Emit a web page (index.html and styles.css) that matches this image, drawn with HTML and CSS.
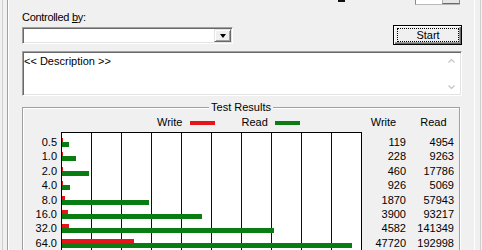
FILE: index.html
```html
<!DOCTYPE html>
<html lang="en">
<head>
    <meta charset="UTF-8">
    <title>Disk Benchmark</title>
    <link rel="stylesheet" href="styles.css">
</head>
<body>
    <div class="outer">
        <div class="frame">
            <div class="strip">
                <span class="mark"></span>
                <span class="spin"><span class="spin-btn"></span></span>
            </div>

            <div class="caption">Controlled <u>b</u>y:</div>

            <div class="ctrl-row">
                <div class="combo">
                    <span class="drop"><i class="tri"></i></span>
                </div>
                <button class="start"><span class="focus">Start</span></button>
            </div>

            <div class="desc">
                <div class="desc-text">&lt;&lt; Description &gt;&gt;</div>
                <div class="vscroll">
                    <svg width="7" height="4" viewBox="0 0 7 4"><polyline points="0.5,3.5 3.5,0.5 6.5,3.5" fill="none" stroke="#c4c4c4" stroke-width="1.2"/></svg>
                    <svg width="7" height="4" viewBox="0 0 7 4"><polyline points="0.5,0.5 3.5,3.5 6.5,0.5" fill="none" stroke="#c4c4c4" stroke-width="1.2"/></svg>
                </div>
            </div>

            <fieldset class="results">
                <legend>Test Results</legend>
                <div class="legend-row">
                    <span class="lg-write">Write</span>
                    <span class="swatch red"></span>
                    <span class="lg-read">Read</span>
                    <span class="swatch green"></span>
                    <span class="hd-write">Write</span>
                    <span class="hd-read">Read</span>
                </div>
                <div class="chart-wrap">
                    <div class="sizes" id="sizes"></div>
                    <div class="chart" id="chart"></div>
                    <div class="col-w" id="colW"></div>
                    <div class="col-r" id="colR"></div>
                </div>
            </fieldset>
        </div>
    </div>

    <script>
        // resultados en KB/s
        const tamanos = ['0.5', '1.0', '2.0', '4.0', '8.0', '16.0', '32.0', '64.0'];
        const escritura = [119, 228, 460, 926, 1870, 3900, 4582, 47720];
        const lectura = [4954, 9263, 17786, 5069, 57943, 93217, 141349, 192998];
        const escala = 300 / 200000;

        let sizes = '', chart = '', colW = '', colR = '';
        tamanos.forEach((t, i) => {
            const w = (escritura[i] * escala).toFixed(1);
            const r = (lectura[i] * escala).toFixed(1);
            sizes += `<div class="row">${t}</div>`;
            chart += `<div class="row bars"><div class="bar red" style="width:${w}px"></div><div class="bar green" style="width:${r}px"></div></div>`;
            colW += `<div class="row">${escritura[i]}</div>`;
            colR += `<div class="row">${lectura[i]}</div>`;
        });
        document.getElementById('sizes').innerHTML = sizes;
        document.getElementById('chart').innerHTML = chart;
        document.getElementById('colW').innerHTML = colW;
        document.getElementById('colR').innerHTML = colR;
    </script>
</body>
</html>
```

FILE: styles.css
```css
* { margin: 0; padding: 0; box-sizing: border-box; }
body {
    font-family: "Liberation Sans", Arial, sans-serif;
    font-size: 11px;
    line-height: 13px;
    background: #f0f0f0;
    color: #000;
    overflow: hidden;
}
.outer {
    margin: 0 1px 0 2px;
    height: 250px;
    border-left: 1px solid #cfcfcf;
    border-right: 1px solid #cfcfcf;
    padding: 0 5px 0 4px;
}
.frame {
    height: 100%;
    border-left: 1px solid #a0a0a0;
    border-right: 1px solid #fff;
    box-shadow: inset 1px 0 #fff;
    padding: 0 12px 0 14px;
}
.strip {
    display: flex;
    height: 5px;
}
.mark {
    width: 7px;
    height: 2px;
    margin-left: 316px;
    background: #111;
}
.spin {
    width: 45px;
    height: 5px;
    margin-left: 70px;
    background: #fff;
    border-left: 1px solid #8a8a8a;
    border-bottom: 1px solid #b8b8b8;
    display: flex;
    justify-content: flex-end;
}
.spin-btn {
    width: 18px;
    height: 100%;
    background: #e6e6e6;
    border-left: 1px solid #b0b0b0;
    border-right: 1px solid #8a8a8a;
    border-bottom: 1px solid #6a6a6a;
}
.caption {
    margin-top: 6px;
    letter-spacing: -0.3px;
}
.ctrl-row {
    display: flex;
    margin-top: 1px;
    height: 20px;
}
.combo {
    width: 211px;
    height: 17px;
    margin-top: 2px;
    background: #fff;
    border: 1px solid;
    border-color: #a0a0a0 #fff #fff #a0a0a0;
    box-shadow: inset 1px 1px #696969, inset -1px -1px #e3e3e3;
    padding: 1px;
    display: flex;
    justify-content: flex-end;
}
.drop {
    width: 17px;
    height: 13px;
    background: #f0f0f0;
    border: 1px solid;
    border-color: #e3e3e3 #696969 #696969 #e3e3e3;
    box-shadow: inset 1px 1px #fff, inset -1px -1px #a0a0a0;
    display: flex;
    align-items: center;
    justify-content: center;
}
.tri {
    width: 0;
    height: 0;
    border-left: 3.5px solid transparent;
    border-right: 3.5px solid transparent;
    border-top: 4px solid #000;
}
.start {
    margin-left: auto;
    width: 69px;
    height: 20px;
    font: inherit;
    color: #000;
    background: #f0f0f0;
    border: 1px solid #000;
    box-shadow: inset 1px 1px #fff, inset -1px -1px #696969, inset -2px -2px #a0a0a0;
    padding: 2px 2px 2px 3px;
}
.focus {
    display: block;
    height: 14px;
    line-height: 12px;
    border: 1px dotted #000;
    text-align: center;
}
.desc {
    display: flex;
    margin-top: 6px;
    height: 45px;
    background: #fff;
    border: 1px solid;
    border-color: #a0a0a0 #fff #fff #a0a0a0;
    box-shadow: inset 1px 1px #696969, inset -1px -1px #e3e3e3;
}
.desc-text {
    flex: 1;
    padding: 3px 0 0 1px;
}
.vscroll {
    width: 17px;
    display: flex;
    flex-direction: column;
    justify-content: space-between;
    align-items: center;
    padding: 7px 2px 6px 0;
}
.results {
    margin: 5px 2px 0 0;
    border: 1px solid #a0a0a0;
    box-shadow: inset 1px 1px #fff, 1px 1px #fff;
    min-width: 0;
    height: 160px;
}
.results legend {
    margin: 0 auto;
    padding: 0 2px;
    background: #f0f0f0;
    line-height: 13px;
}
.legend-row {
    display: flex;
    margin-top: 2px;
    height: 13px;
}
.lg-write { margin-left: 134px; }
.swatch {
    width: 25px;
    height: 4px;
    margin-top: 5px;
}
.swatch.red { margin-left: 8px; background: #e8141c; }
.lg-read { margin-left: 26px; }
.swatch.green { margin-left: 7px; background: #0a7d12; }
.hd-write { margin-left: 71px; }
.hd-read { margin-left: 24px; }
.chart-wrap {
    display: flex;
    margin-top: 3px;
}
.row {
    height: 14.4px;
    line-height: 14.4px;
}
.row.bars {
    padding-top: 3px;
}
.sizes {
    width: 37px;
    padding: 3px 4px 0 0;
    text-align: right;
    margin-left: 1px;
}
.chart {
    width: 301px;
    height: 200px;
    border-left: 1px solid #000;
    border-top: 1px solid #000;
    border-right: 1px solid #000;
    padding-top: 2px;
    background: #fff repeating-linear-gradient(to right, transparent 0 29px, #000080 29px 30px);
}
.bar { height: 4px; }
.bar.red { background: #e8141c; }
.bar.green { height: 5px; background: #0a7d12; }
.col-w {
    width: 44px;
    padding-top: 3px;
    text-align: right;
}
.col-r {
    width: 48px;
    padding-top: 3px;
    text-align: right;
}
```
